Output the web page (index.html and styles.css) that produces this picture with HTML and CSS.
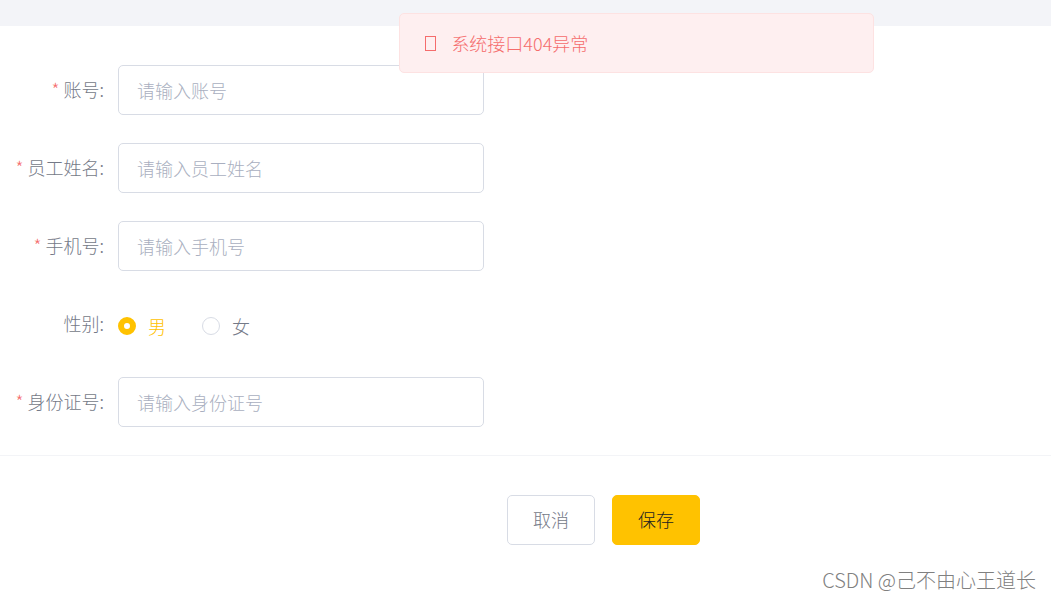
FILE: index.html
```html
<!DOCTYPE html>
<html lang="zh-CN">
<head>
    <meta charset="UTF-8">
    <meta name="viewport" content="width=device-width, initial-scale=1.0">
    <title>添加员工</title>
    <link rel="stylesheet" href="styles.css">
</head>
<body>
    <div class="message" role="alert">
        <span class="message-icon" aria-hidden="true"></span>
        <p class="message-content">系统接口404异常</p>
    </div>
    <main class="container">
        <form class="form">
            <div class="form-item required">
                <label class="form-label" for="username">账号:</label>
                <input class="form-input" type="text" id="username" name="username" placeholder="请输入账号">
            </div>
            <div class="form-item required">
                <label class="form-label" for="name">员工姓名:</label>
                <input class="form-input" type="text" id="name" name="name" placeholder="请输入员工姓名">
            </div>
            <div class="form-item required">
                <label class="form-label" for="phone">手机号:</label>
                <input class="form-input" type="text" id="phone" name="phone" placeholder="请输入手机号">
            </div>
            <div class="form-item" role="radiogroup" aria-labelledby="sexLabel">
                <span class="form-label" id="sexLabel">性别:</span>
                <div class="radio-group">
                    <label class="radio"><input type="radio" name="sex" value="1" checked><span>男</span></label>
                    <label class="radio"><input type="radio" name="sex" value="0"><span>女</span></label>
                </div>
            </div>
            <div class="form-item required">
                <label class="form-label" for="idNumber">身份证号:</label>
                <input class="form-input" type="text" id="idNumber" name="idNumber" placeholder="请输入身份证号">
            </div>
            <div class="form-footer">
                <button class="btn" type="button">取消</button>
                <button class="btn btn-primary" type="submit">保存</button>
            </div>
        </form>
    </main>
    <div class="watermark">CSDN @己不由心王道长</div>
</body>
</html>
```
FILE: styles.css
```css
* {
    box-sizing: border-box;
}
body {
    margin: 0;
    min-height: 100vh;
    padding-top: 26px;
    background-color: #f3f4f8;
    color: #747987;
    font-family: "Noto Sans CJK SC", "Liberation Sans", sans-serif;
    font-size: 18px;
    font-weight: 300;
    line-height: 24px;
    display: flex;
    flex-direction: column;
    position: relative;
}
input, button {
    font: inherit;
}
.container {
    flex: 1;
    background-color: #fff;
    padding-top: 39px;
}
.form-item {
    display: flex;
    align-items: center;
    height: 50px;
    margin-bottom: 28px;
}
.form-label {
    width: 118px;
    padding-right: 14px;
    padding-bottom: 2px;
    text-align: right;
    white-space: nowrap;
}
.required .form-label::before {
    content: "*";
    color: #f56c6c;
    margin-right: 4px;
}
.form-input {
    width: 366px;
    height: 50px;
    padding: 0 18px;
    border: 1px solid #d8dce5;
    border-radius: 5px;
    background-color: #fff;
    color: #333;
    outline: none;
}
.form-input::placeholder {
    color: #a9afc0;
    opacity: 1;
}
.form-input:focus {
    border-color: #ffc200;
}
.radio-group {
    display: flex;
    gap: 36px;
    padding-top: 3px;
}
.radio {
    display: flex;
    align-items: center;
    gap: 12px;
    cursor: pointer;
}
.radio input {
    appearance: none;
    width: 18px;
    height: 18px;
    margin: 0;
    border: 1px solid #d8dce5;
    border-radius: 50%;
    background-color: #fff;
}
.radio input:checked {
    border: 6px solid #ffc200;
}
.radio input:checked + span {
    color: #ffc200;
}
.form-footer {
    display: flex;
    justify-content: center;
    gap: 17px;
    border-top: 1px solid #f3f4f7;
    padding: 39px 0 39px 156px;
}
.btn {
    width: 88px;
    height: 50px;
    padding: 0 0 2px;
    border: 1px solid #d8dce5;
    border-radius: 5px;
    background-color: #fff;
    color: #747987;
    cursor: pointer;
}
.btn-primary {
    border-color: #ffc200;
    background-color: #ffc200;
    color: #222;
}
/* error toast, over the form */
.message {
    position: absolute;
    top: 13px;
    left: 38%;
    width: 475px;
    height: 60px;
    padding: 0 25px;
    display: flex;
    align-items: center;
    gap: 15px;
    border: 1px solid #fde2e2;
    border-radius: 5px;
    background-color: #feeff0;
    color: #f56c6c;
    z-index: 1;
}
.message-icon {
    width: 11px;
    height: 15px;
    border: 1px solid #f56c6c;
}
.message-content {
    margin: 0;
}
.watermark {
    position: absolute;
    right: 15px;
    bottom: 7px;
    font-size: 20px;
    color: #808080;
}
```
